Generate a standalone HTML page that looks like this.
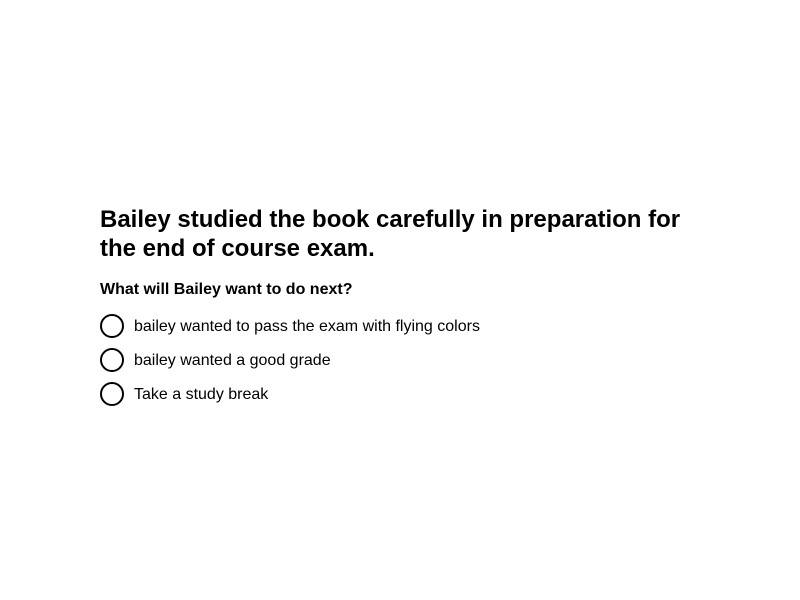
<!DOCTYPE html>
<html><head><style>
body{margin:0;width:800px;height:600px;background:#fff;font-family:"Liberation Sans",Arial,sans-serif;color:#000}
.wrap{position:absolute;left:100px;top:205px;width:600px}
h1{font-size:24px;line-height:29px;margin:0;font-weight:bold}
h2{font-size:16px;margin:0;position:absolute;top:76px;font-weight:bold}
.opt{position:absolute;left:0;height:24px;display:flex;align-items:center;font-size:16px}
.opt span{position:relative;top:1px}
.c{width:20px;height:20px;border:2px solid #000;border-radius:50%;margin-right:10px}
</style></head><body>
<div class="wrap">
<h1>Bailey studied the book carefully in preparation for the end of course exam.</h1>
<h2>What will Bailey want to do next?</h2>
<div class="opt" style="top:109px"><div class="c"></div><span>bailey wanted to pass the exam with flying colors</span></div>
<div class="opt" style="top:143px"><div class="c"></div><span>bailey wanted a good grade</span></div>
<div class="opt" style="top:177px"><div class="c"></div><span>Take a study break</span></div>
</div>
</body></html>
